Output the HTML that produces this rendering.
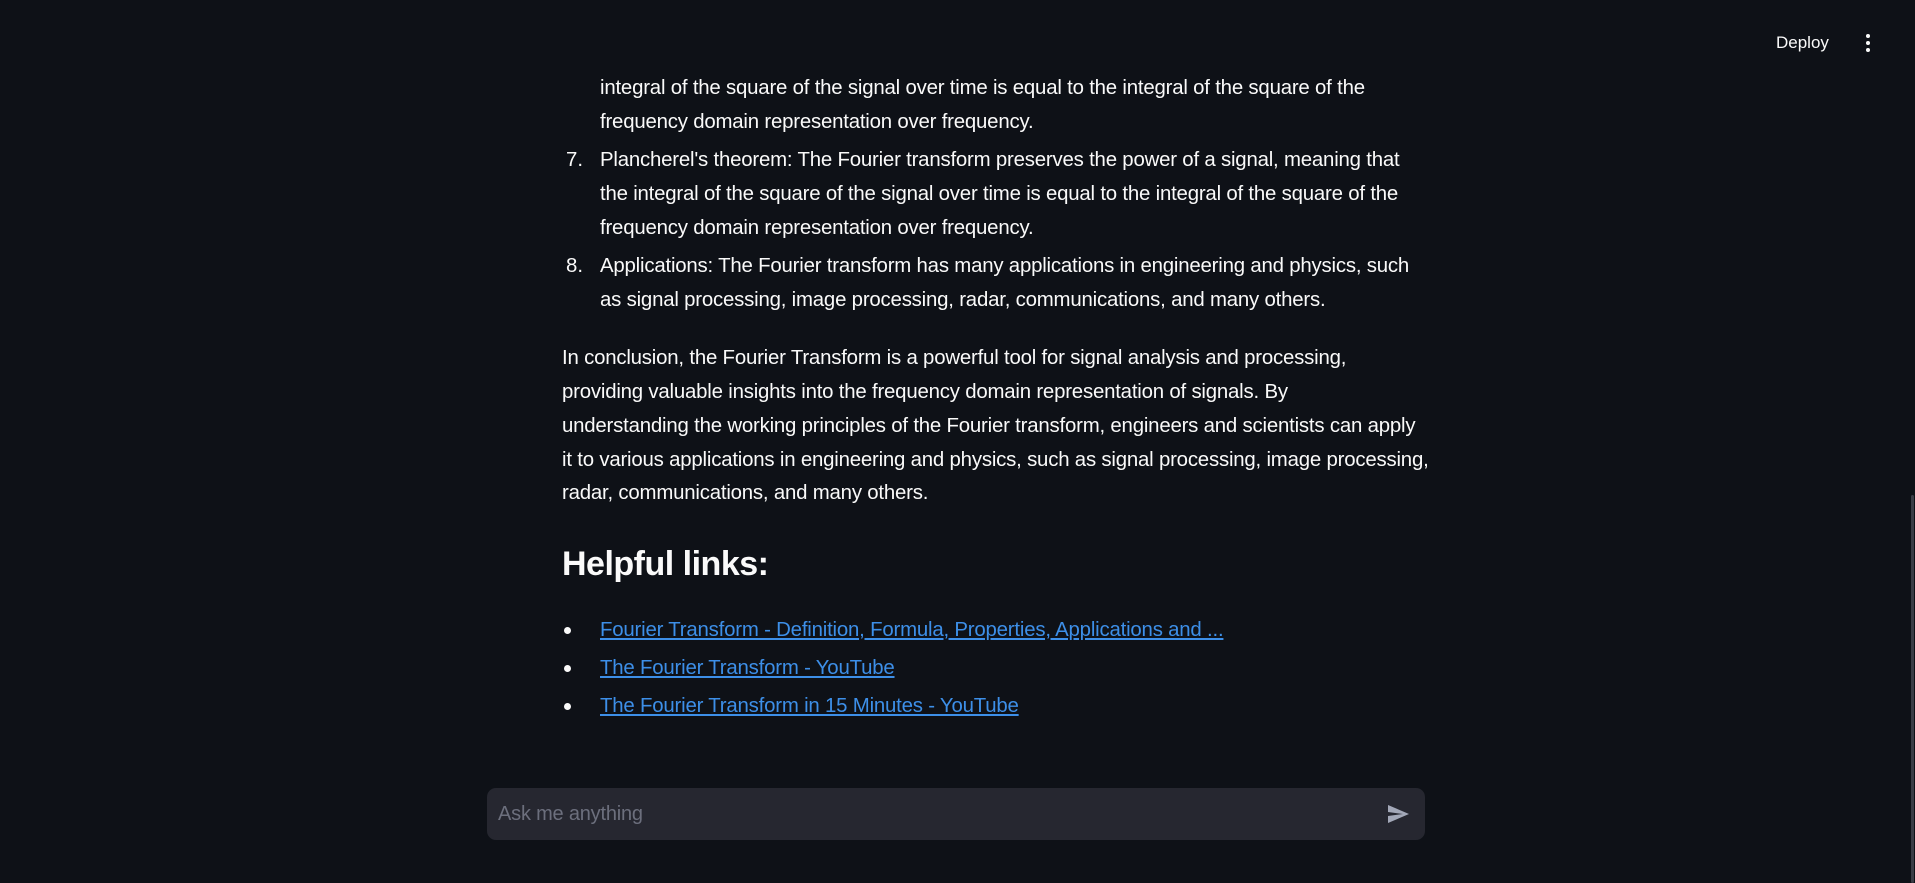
<!DOCTYPE html>
<html><head><meta charset="utf-8"><style>
html,body{margin:0;padding:0;background:#0e1117;width:1915px;height:883px;overflow:hidden;font-family:"Liberation Sans",sans-serif;color:#fafafa}
.l{position:absolute;white-space:nowrap;font-size:20.4px;line-height:34px;letter-spacing:-0.2px}
.n{position:absolute;font-size:20.4px;line-height:34px}
a{color:#3d8fe8;text-decoration:underline}
.b{position:absolute;left:564px;width:7px;height:7px;border-radius:50%;background:#fafafa}
</style></head><body>
<div class="l" style="left:600px;top:71px">integral of the square of the signal over time is equal to the integral of the square of the</div>
<div class="l" style="left:600px;top:105px">frequency domain representation over frequency.</div>
<div class="n" style="left:566px;top:143px">7.</div>
<div class="l" style="left:600px;top:143px">Plancherel's theorem: The Fourier transform preserves the power of a signal, meaning that</div>
<div class="l" style="left:600px;top:177px">the integral of the square of the signal over time is equal to the integral of the square of the</div>
<div class="l" style="left:600px;top:211px">frequency domain representation over frequency.</div>
<div class="n" style="left:566px;top:249px">8.</div>
<div class="l" style="left:600px;top:249px">Applications: The Fourier transform has many applications in engineering and physics, such</div>
<div class="l" style="left:600px;top:283px">as signal processing, image processing, radar, communications, and many others.</div>
<div class="l" style="left:562px;top:341px">In conclusion, the Fourier Transform is a powerful tool for signal analysis and processing,</div>
<div class="l" style="left:562px;top:375px">providing valuable insights into the frequency domain representation of signals. By</div>
<div class="l" style="left:562px;top:409px">understanding the working principles of the Fourier transform, engineers and scientists can apply</div>
<div class="l" style="left:562px;top:443px">it to various applications in engineering and physics, such as signal processing, image processing,</div>
<div class="l" style="left:562px;top:476px">radar, communications, and many others.</div>
<div style="position:absolute;left:562px;top:542px;font-size:34px;font-weight:bold;line-height:44px;letter-spacing:-0.5px">Helpful links:</div>
<div class="b" style="top:627px"></div>
<div class="l" style="left:600px;top:613px"><a>Fourier Transform - Definition, Formula, Properties, Applications and ...</a></div>
<div class="b" style="top:665px"></div>
<div class="l" style="left:600px;top:651px"><a>The Fourier Transform - YouTube</a></div>
<div class="b" style="top:703px"></div>
<div class="l" style="left:600px;top:689px"><a>The Fourier Transform in 15 Minutes - YouTube</a></div>
<div style="position:absolute;left:1776px;top:32px;font-size:17px;line-height:22px">Deploy</div>
<svg style="position:absolute;left:1862px;top:32px" width="12" height="22" viewBox="0 0 12 22"><circle cx="6" cy="4" r="2" fill="#fafafa"/><circle cx="6" cy="11" r="2" fill="#fafafa"/><circle cx="6" cy="18" r="2" fill="#fafafa"/></svg>
<div style="position:absolute;left:487px;top:788px;width:938px;height:52px;border-radius:9px;background:#262730"></div>
<div style="position:absolute;left:498px;top:801px;font-size:20px;line-height:26px;color:#6c6f7d;letter-spacing:-0.2px">Ask me anything</div>
<svg style="position:absolute;left:1385px;top:802px" width="26" height="24" viewBox="0 0 24 24"><path d="M2 21l21-9L2 3v7l15 2-15 2z" fill="#a3a8b8"/></svg>
<div style="position:absolute;left:1911px;top:495px;width:3px;height:388px;background:#3a3d46;border-radius:2px"></div>
</body></html>
